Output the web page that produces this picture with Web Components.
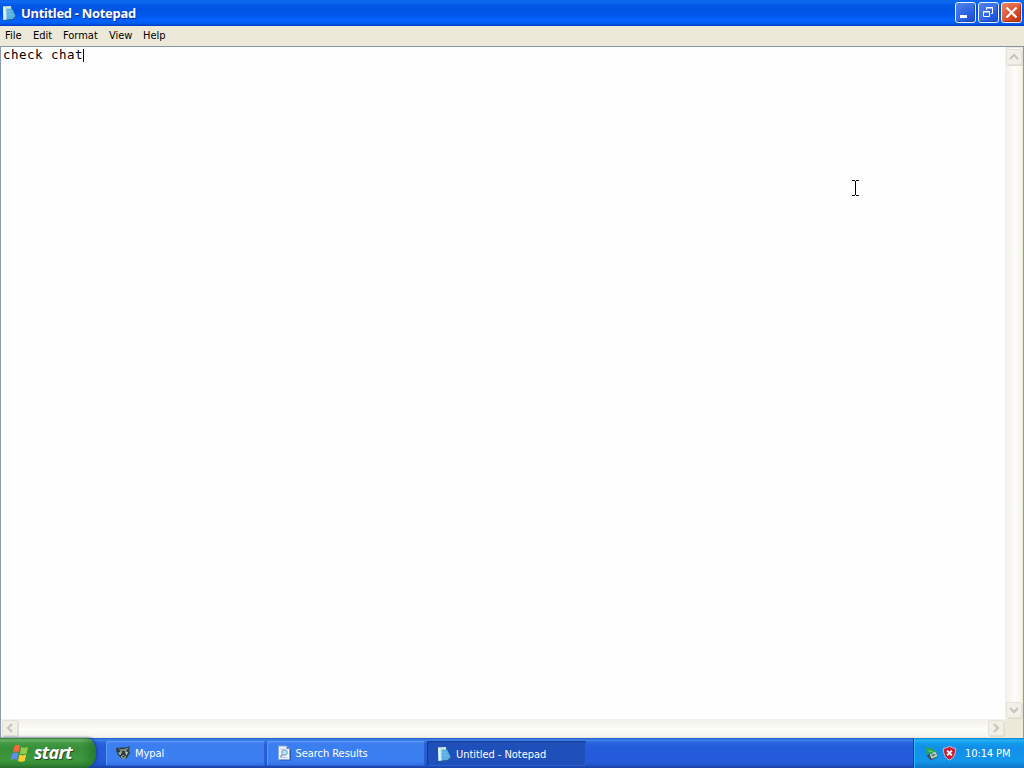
<!DOCTYPE html>
<html lang="en">
<head>
<meta charset="utf-8">
<title>Untitled - Notepad</title>
<style>
  html, body { margin: 0; height: 100%; overflow: hidden; }
  body { font: 11px/14px "DejaVu Sans Condensed", "DejaVu Sans", sans-serif; color: #000; cursor: default; }
</style>
</head>
<body>

<xp-desktop>
  <xp-window>
    <xp-titlebar slot="title">Untitled - Notepad</xp-titlebar>
    <xp-menubar slot="menu">
      <xp-menu-item style="width:28px">File</xp-menu-item>
      <xp-menu-item style="width:30px">Edit</xp-menu-item>
      <xp-menu-item style="width:46px">Format</xp-menu-item>
      <xp-menu-item style="width:34px">View</xp-menu-item>
      <xp-menu-item>Help</xp-menu-item>
    </xp-menubar>
    <xp-editor>check chat</xp-editor>
  </xp-window>
  <xp-taskbar slot="taskbar">
    <xp-start-button slot="start">start</xp-start-button>
    <xp-task><xp-icon slot="icon" name="raccoon"></xp-icon>Mypal</xp-task>
    <xp-task><xp-icon slot="icon" name="search"></xp-icon>Search Results</xp-task>
    <xp-task active><xp-icon slot="icon" name="notepad"></xp-icon>Untitled - Notepad</xp-task>
    <xp-tray slot="tray">10:14 PM</xp-tray>
  </xp-taskbar>
  <xp-pointer slot="pointer"></xp-pointer>
</xp-desktop>

<script>
const ICONS = {
  notepad: `
    <path d="M4 3h7l4 8-1 3-4 1.500H3z" fill="#235fa8"/>
    <path d="M2 1.500l8-.5 1.500 12.500L2.500 15z" fill="#8ed0ea"/>
    <path d="M6 3.500l5.500 1L14.500 11l-3 3H6z" fill="#5cb0e0"/>
    <path d="M2 1.500h2.500L5 14.500l-2.500.5z" fill="#dcf3f8"/>
    <path d="M4.500 1.500l5-.5.500 2-5 .5z" fill="#d5e6d8"/>
    <path d="M6.500 6.500h4M7 9.500h4.500" stroke="#74bfe8"/>`,
  search: `
    <path d="M4 2h8l3 3v10.500H4z" fill="#2c55a8"/>
    <path d="M2.500 1h8l3 3v10.500h-11z" fill="#edf5ff" stroke="#86a6dc"/>
    <path d="M10.500 1v3h3z" fill="#5d7fba"/>
    <path d="M4.500 4h4M4.500 12.500h7" stroke="#b7cbe6"/>
    <circle cx="8.500" cy="7.500" r="2.800" fill="#b5e0f6" stroke="#7898bb"/>
    <path d="M6.500 9.500L4.500 12" stroke="#799bbf" stroke-width="1.500"/>`,
  raccoon: `
    <path d="M1 3l4-.5h6l4-1.500-1 4 1 3-3.500 5.500h-5L3 10 1.500 7z" fill="#2c3d42"/>
    <path d="M3 3.500l4 .8 2-.3 5-1.500-3 3.500H6z" fill="#7f8f86"/>
    <path d="M3 7l3.500 1L5 10.500zM13.500 6.500L10 8l1.500 2.500zM6 11.500l2-1.500 3 1.500-1 2H7z" fill="#b3c0ae"/>
    <path d="M5 7h2M10 7h2" stroke="#dfe6d0"/>
    <path d="M7.500 11h2v1.500h-2z" fill="#10191c"/>`,
  flag: `
    <path d="M4.500 1.500C6 .3 8 .5 9.600 1.500L8.300 7.800C6.600 6.800 4.800 6.800 2.600 8z" fill="#f0693a"/>
    <path d="M10.600 2.800c2 1 4 1 6.600 0L15.700 9c-2 1-4 1-6.400 0z" fill="#93cc4c"/>
    <path d="M2.300 9C4.500 7.800 6.400 7.900 8 8.900L6.700 15C5 14 3 14 .8 15.200z" fill="#5f8cf0"/>
    <path d="M9 10c2 1 4 1 6.400 0L14 16c-2 1-4 1-6.400 0z" fill="#f9cd35"/>`,
  device: `
    <path d="M3 11l2-2 7-3 3 6-8 4z" fill="#36505c"/>
    <path d="M6 9l6-2.500 2.500 5L8 14z" fill="#c9d3bd"/>
    <path d="M8 10l3.500-1.500.8 1.700L9 12z" fill="#4f7b74"/>
    <path d="M1 1l4 2 4-1.500L8.500 4l5 2-5 1 .5 3L5 8 1 9l2-4z" fill="#28a44a"/>
    <path d="M2 2l3 3 6 1-5 1z" fill="#62dc73"/>`,
  shield: `
    <path d="M1.500 3C4 3 6 2 8 .8 10 2 12 3 14.500 3c.3 6-2 10.500-6.500 12.500C3.500 13.500 1.200 9 1.500 3z" fill="#c51e35" stroke="#dfbfd0"/>
    <path d="M5.500 5.500l5 5M10.500 5.500l-5 5" stroke="#fff" stroke-width="2"/>`
};

function register(name, html, setup) {
  const template = document.createElement('template');
  template.innerHTML = html;
  customElements.define(name, class extends HTMLElement {
    constructor() {
      super();
      this.attachShadow({ mode: 'open' }).appendChild(template.content.cloneNode(true));
    }
    connectedCallback() {
      if (setup) setup(this);
    }
  });
}

register('xp-icon', `
  <style>
    :host { display: block; width: 16px; height: 16px; flex: none; }
    svg { display: block; width: 100%; height: 100%; }
  </style>
  <svg fill="none"></svg>
`, el => {
  const name = el.getAttribute('name');
  const svg = el.shadowRoot.querySelector('svg');
  svg.setAttribute('viewBox', name === 'flag' ? '0 0 18 17' : '0 0 16 16');
  svg.innerHTML = ICONS[name];
});

register('xp-desktop', `
  <style>
    :host { display: grid; grid-template-rows: 738px 30px; width: 1024px; height: 768px; position: relative; overflow: hidden; }
  </style>
  <slot></slot>
  <slot name="taskbar"></slot>
  <slot name="pointer"></slot>
`);

register('xp-window', `
  <style>
    :host { display: grid; grid-template-rows: 26px 21px 1fr; min-height: 0; background: #ece9d8; }
  </style>
  <slot name="title"></slot>
  <slot name="menu"></slot>
  <slot></slot>
`);

register('xp-window-button', `
  <style>
    :host { display: block; box-sizing: border-box; width: 21px; height: 21px; border: 1px solid #e9f0ff; border-radius: 3px;
      background: radial-gradient(circle at 80% 90%, #1d50d8 0, #2f66e4 45%, #5585ec 100%); box-shadow: inset -1px -1px 1px #1d45ba; }
    :host([kind=close]) { background: radial-gradient(circle at 80% 90%, #c23b12 0, #dd5431 50%, #ec8c70 100%); box-shadow: inset -1px -1px 1px #a52e10; }
    svg { display: block; }
  </style>
  <svg width="19" height="19" fill="none" stroke="#fff"></svg>
`, el => {
  const shapes = {
    min: '<path d="M4 13.500h7" stroke-width="3"/>',
    restore: '<path d="M7.500 7V4.500h6v6H12M7 5h7"/><path d="M4.500 8.500h6v5h-6zM4 9h7"/>',
    close: '<path d="M4.500 4.500l10 10M14.500 4.500l-10 10" stroke-width="2.200"/>'
  };
  el.shadowRoot.querySelector('svg').innerHTML = shapes[el.getAttribute('kind')];
});

register('xp-titlebar', `
  <style>
    :host { display: flex; align-items: center; box-sizing: border-box; padding: 0 2px 1px 1px; color: #fff;
      background: linear-gradient(#1263e8 0, #0a6cf4 2px, #0359e7 5px, #0054e3 9px, #0055e9 14px, #0362fb 20px, #0160f8 23px, #0048d0 25px, #003dc0 26px); }
    .text { flex: 1; margin-left: 4px; font: bold 13px/20px "Noto Sans", sans-serif; text-shadow: 1px 1px #0a2d91; white-space: nowrap; letter-spacing: -.32px; padding-top: 1px; }
    .buttons { display: flex; gap: 2px; }
  </style>
  <xp-icon name="notepad"></xp-icon>
  <div class="text"><slot></slot></div>
  <div class="buttons">
    <xp-window-button kind="min"></xp-window-button>
    <xp-window-button kind="restore"></xp-window-button>
    <xp-window-button kind="close"></xp-window-button>
  </div>
`);

register('xp-menubar', `
  <style>
    :host { display: flex; align-items: center; box-sizing: border-box; padding: 0 0 1px 5px; background: #ece9d8; border-bottom: 1px solid #8394ad; }
  </style>
  <slot></slot>
`);

register('xp-menu-item', `
  <style>
    :host { display: block; white-space: nowrap; }
  </style>
  <slot></slot>
`);

register('xp-scrollbar', `
  <style>
    :host { display: flex; justify-content: space-between; align-items: center; box-sizing: border-box;
      background: linear-gradient(#f1f0e9, #fdfdf9 60%, #f5f4ec); }
    :host([vertical]) { flex-direction: column; background: linear-gradient(90deg, #f1f0e9, #fdfdf9 60%, #f5f4ec); }
    span { display: block; box-sizing: border-box; width: 16px; height: 16px; margin: 1px; border: 1px solid #e5e3d8; border-radius: 2px; background: #f0efe8; box-shadow: 1px 1px #dddbd0; }
    svg { display: block; }
    .end svg { transform: rotate(180deg); }
  </style>
  <span><svg width="14" height="14" fill="none" stroke="#c6c4b7" stroke-width="2"><path></path></svg></span>
  <span class="end"><svg width="14" height="14" fill="none" stroke="#c6c4b7" stroke-width="2"><path></path></svg></span>
`, el => {
  const d = el.hasAttribute('vertical') ? 'M3 9l4-4 4 4' : 'M9 3L5 7l4 4';
  el.shadowRoot.querySelectorAll('path').forEach(path => path.setAttribute('d', d));
});

register('xp-editor', `
  <style>
    :host { display: grid; grid-template: 1fr 18px / 1fr 17px; box-sizing: border-box; min-height: 0; border: solid #8b9cae; border-width: 0 1px 0 1px; padding: 1px 1px 1px 0; background: #ece9d8; }
    .page { display: flex; align-items: flex-start; margin-top: -1px; padding: 1px 2px; background: #fefefe; font: 12.500px/14px "DejaVu Sans Mono", monospace; letter-spacing: .475px; }
    .caret { width: 1px; height: 13px; background: #000; margin-top: 1px; }
  </style>
  <div class="page"><slot></slot><i class="caret"></i></div>
  <xp-scrollbar vertical></xp-scrollbar>
  <xp-scrollbar></xp-scrollbar>
`);

register('xp-taskbar', `
  <style>
    :host { display: flex; background: linear-gradient(#2059c5 0, #3f84ee 2px, #2c68df 4px, #245ddb 8px, #245bdb 22px, #2157d0 26px, #1941a5 30px); }
    .tasks { display: flex; flex: 1; gap: 2px; padding: 3px 0 2px 10px; }
  </style>
  <slot name="start"></slot>
  <div class="tasks"><slot></slot></div>
  <slot name="tray"></slot>
`);

register('xp-start-button', `
  <style>
    :host { display: flex; align-items: center; box-sizing: border-box; width: 96px; padding: 0 0 0 10px; color: #fff;
      border-radius: 0 9px 11px 0 / 0 14px 14px 0;
      background: linear-gradient(90deg, transparent 85%, #1c6b2699 100%), linear-gradient(#347b36 0, #68b367 2px, #439a43 5px, #388f39 10px, #3c983c 22px, #348a35 26px, #246c29 30px);
      box-shadow: 1px 0 3px #173d86; }
    xp-icon { width: 19px; height: 18px; margin: -1px 1px 0 0; }
    b { margin: -2px 0 0 4px; font: italic bold 18px/24px "Open Sans", sans-serif; text-shadow: 1px 1px 1px #25451f; letter-spacing: -.7px; }
  </style>
  <xp-icon name="flag"></xp-icon>
  <b><slot></slot></b>
`);

register('xp-task', `
  <style>
    :host { display: flex; align-items: center; gap: 4px; box-sizing: border-box; width: 158.500px; height: 25px; padding: 1px 0 0 9px; color: #fff; border-radius: 2px; white-space: nowrap;
      background: linear-gradient(#5592f6 0, #3b7eef 3px, #3c7ff2 20px, #316de0 25px); box-shadow: inset 1px 1px #5e98f5, inset -1px -1px #2b62cf; letter-spacing: -.05px; }
    :host([active]) { padding: 2px 0 0 9px; background: #1f4fb8; box-shadow: inset 1px 1px 1px #143989, inset -1px -1px #2a5fca; }
    ::slotted(xp-icon) { margin-top: -2px; }
  </style>
  <slot name="icon"></slot><span><slot></slot></span>
`);

register('xp-tray', `
  <style>
    :host { display: flex; align-items: center; box-sizing: border-box; width: 111px; padding-left: 10px; color: #fff; border-left: 1px solid #123f9c;
      background: linear-gradient(#0d7fcf 0, #27b4f5 2px, #139bea 5px, #118fe9 10px, #1396eb 23px, #1076c5 30px); box-shadow: inset 1px 0 #32b9f4; }
    xp-icon { width: 15px; height: 16px; margin-right: 3px; }
    .time { margin: 1px 0 0 5px; white-space: nowrap; letter-spacing: -.1px; }
  </style>
  <xp-icon name="device"></xp-icon>
  <xp-icon name="shield"></xp-icon>
  <span class="time"><slot></slot></span>
`);

register('xp-pointer', `
  <style>
    :host { position: absolute; left: 852px; top: 180px; }
    svg { display: block; }
  </style>
  <svg width="7" height="16" fill="none" stroke="#000"><path d="M0 .5h3M4 .5h3M3.500 1v14M0 15.500h3M4 15.500h3"/></svg>
`);
</script>
</body>
</html>
